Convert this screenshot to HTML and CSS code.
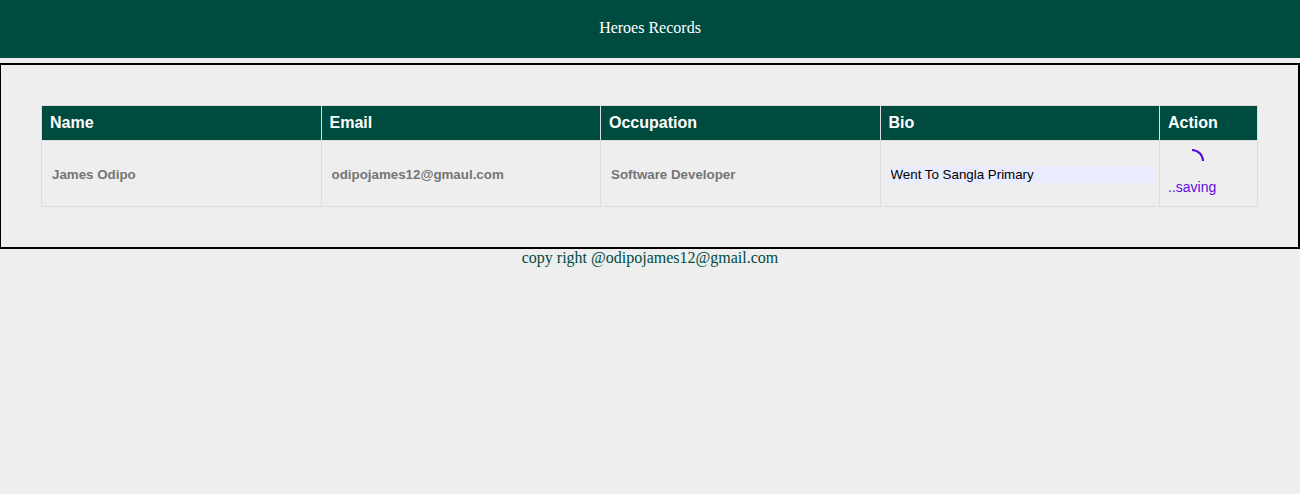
FILE: index.html
```html
<!DOCTYPE html>
<html lang="en">
<head>
<meta charset="utf-8">
<title>Heroes Records</title>
<link rel="stylesheet" href="styles.css">
</head>
<body>
<header class="header">Heroes Records</header>
<main class="content">
  <table class="records">
    <thead>
      <tr><th>Name</th><th>Email</th><th>Occupation</th><th>Bio</th><th class="action">Action</th></tr>
    </thead>
    <tbody>
      <tr>
        <td><input class="field" type="text" aria-label="Name" value="James Odipo" disabled></td>
        <td><input class="field" type="text" aria-label="Email" value="odipojames12@gmaul.com" disabled></td>
        <td><input class="field" type="text" aria-label="Occupation" value="Software Developer" disabled></td>
        <td><input class="field field-active" type="text" aria-label="Bio" value="Went To Sangla Primary"></td>
        <td>
          <div class="saving">
            <svg class="spinner" viewBox="0 0 24 24" aria-hidden="true"><path d="M12 1A11 11 0 0 1 23 12"/></svg>
            <span>..saving</span>
          </div>
        </td>
      </tr>
    </tbody>
  </table>
</main>
<footer class="footer">copy right @odipojames12@gmail.com</footer>
</body>
</html>
```
FILE: styles.css
```css
* {
  box-sizing: border-box;
}

body {
  margin: 0;
  background: #eee;
  font: 16px/18px "Liberation Serif", "Times New Roman", serif;
}

.header {
  padding: 19px 20px 21px;
  background: #004b40;
  color: #fff;
  text-align: center;
}

.content {
  margin-top: 5px;
  padding: 40px;
  border: 2px solid #000;
  border-left-width: 1px;
}

.records {
  width: 100%;
  table-layout: fixed;
  border-collapse: collapse;
  font-family: "Liberation Sans", Arial, sans-serif;
}

.records th,
.records td {
  padding: 8px;
  border: 1px solid #ddd;
  text-align: left;
}

.records th {
  background: #004b40;
  color: #fff;
}

.action {
  width: 98px;
}

.field {
  box-sizing: content-box;
  width: 100%;
  padding: 1px 2px;
  border: 0;
  background: transparent;
  color: #757575;
  font-family: "Liberation Sans", Arial, sans-serif;
  font-weight: bold;
}

.field-active {
  background: #e8ecfe;
  color: #000;
  font-weight: normal;
}

.saving {
  display: flex;
  flex-direction: column;
  align-items: flex-start;
  gap: 5px;
  padding-bottom: 2px;
  color: #5d0fdc;
  font-size: 14px;
  line-height: 18px;
}

.spinner {
  width: 24px;
  height: 24px;
  margin-left: 12px;
  fill: none;
  stroke: #5509dc;
  stroke-width: 2;
}

.footer {
  color: #004b40;
  text-align: center;
}
```
